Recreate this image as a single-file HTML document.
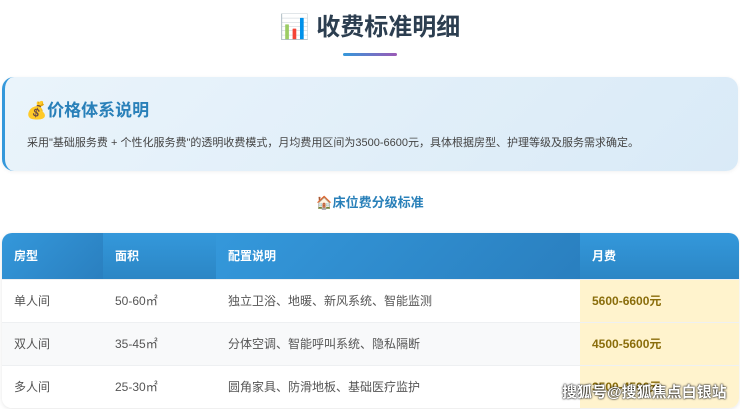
<!DOCTYPE html>
<html><head><meta charset="utf-8"><style>
*{margin:0;padding:0;box-sizing:border-box}
body{width:740px;height:409px;overflow:hidden;background:#fff;font-family:"Liberation Sans","Noto Sans CJK SC",sans-serif;position:relative}
.title{position:absolute;top:10px;left:0;width:740px;text-align:center;font-size:24px;font-weight:bold;color:#2c3e50;line-height:36px}
.bar{position:absolute;left:343px;top:53px;width:54px;height:3px;border-radius:2px;background:linear-gradient(90deg,#3498db,#9b59b6)}
.card{position:absolute;left:2px;top:77px;width:736px;height:94px;border-radius:12px;border-left:3px solid #3498db;background:linear-gradient(135deg,#eaf4fb,#d9eaf7);box-shadow:0 1px 4px rgba(0,0,0,.06)}
.card h3{position:absolute;left:21px;top:22px;font-size:17px;color:#2980b9;line-height:24px}
.card p{position:absolute;left:22px;top:57px;font-size:11px;color:#444;line-height:18px;white-space:nowrap}
.sub{position:absolute;top:193px;left:0;width:740px;text-align:center;font-size:13px;font-weight:bold;color:#2980b9;line-height:20px}
table{position:absolute;left:2px;top:233px;width:737px;border-collapse:collapse;font-size:12px;border-radius:10px;overflow:hidden;box-shadow:0 1px 4px rgba(0,0,0,.1)}
th{height:46px;text-align:left;padding-left:12px;color:#fff;font-weight:bold;background:linear-gradient(180deg,#3498db,#2b86c5)}
th:nth-child(odd){background:linear-gradient(135deg,#3498db,#2a7fbf)}
td{height:43px;padding-left:12px;color:#555;background:#fff}
tr:nth-child(3) td{background:#f8f9fa}
td:last-child{background:#fff3cd !important;color:#8a6d0b;font-weight:bold}
tr+tr td{border-top:1px solid #eef0f2}
.wm{position:absolute;left:562px;top:381px;font-size:15px;font-weight:bold;color:#fff;text-shadow:0 0 2px #000,0 0 1px #000}
</style></head><body>
<div class="title">📊 收费标准明细</div>
<div class="bar"></div>
<div class="card"><h3>💰价格体系说明</h3><p>采用"基础服务费 + 个性化服务费"的透明收费模式，月均费用区间为3500-6600元，具体根据房型、护理等级及服务需求确定。</p></div>
<div class="sub">🏠床位费分级标准</div>
<table>
<tr><th style="width:101px">房型</th><th style="width:113px">面积</th><th style="width:364px">配置说明</th><th>月费</th></tr>
<tr><td>单人间</td><td>50-60㎡</td><td>独立卫浴、地暖、新风系统、智能监测</td><td>5600-6600元</td></tr>
<tr><td>双人间</td><td>35-45㎡</td><td>分体空调、智能呼叫系统、隐私隔断</td><td>4500-5600元</td></tr>
<tr><td>多人间</td><td>25-30㎡</td><td>圆角家具、防滑地板、基础医疗监护</td><td>3500-4500元</td></tr>
</table>
<div class="wm">搜狐号@搜狐焦点白银站</div>
</body></html>
